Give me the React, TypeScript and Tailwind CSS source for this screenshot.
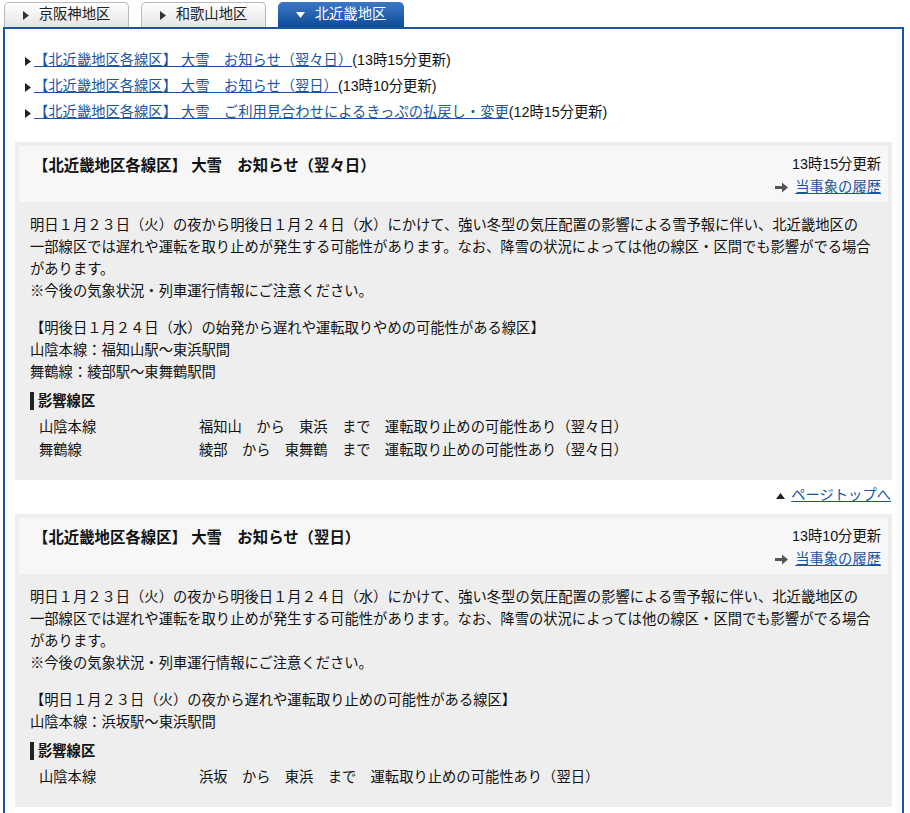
import React from "react";

type Route = { line: string; from: string; to: string; note: string };

type Notice = {
  title: string;
  updated: string;
  body: string[];
  lead: string;
  sections: string[];
  routes: Route[];
};

const notices: Notice[] = [
  {
    title: "【北近畿地区各線区】 大雪　お知らせ（翌々日）",
    updated: "13時15分更新",
    body: [
      "明日１月２３日（火）の夜から明後日１月２４日（水）にかけて、強い冬型の気圧配置の影響による雪予報に伴い、北近畿地区の",
      "一部線区では遅れや運転を取り止めが発生する可能性があります。なお、降雪の状況によっては他の線区・区間でも影響がでる場合",
      "があります。",
      "※今後の気象状況・列車運行情報にご注意ください。",
    ],
    lead: "【明後日１月２４日（水）の始発から遅れや運転取りやめの可能性がある線区】",
    sections: ["山陰本線：福知山駅～東浜駅間", "舞鶴線：綾部駅～東舞鶴駅間"],
    routes: [
      { line: "山陰本線", from: "福知山", to: "東浜", note: "運転取り止めの可能性あり（翌々日）" },
      { line: "舞鶴線", from: "綾部", to: "東舞鶴", note: "運転取り止めの可能性あり（翌々日）" },
    ],
  },
  {
    title: "【北近畿地区各線区】 大雪　お知らせ（翌日）",
    updated: "13時10分更新",
    body: [
      "明日１月２３日（火）の夜から明後日１月２４日（水）にかけて、強い冬型の気圧配置の影響による雪予報に伴い、北近畿地区の",
      "一部線区では遅れや運転を取り止めが発生する可能性があります。なお、降雪の状況によっては他の線区・区間でも影響がでる場合",
      "があります。",
      "※今後の気象状況・列車運行情報にご注意ください。",
    ],
    lead: "【明日１月２３日（火）の夜から遅れや運転取り止めの可能性がある線区】",
    sections: ["山陰本線：浜坂駅～東浜駅間"],
    routes: [{ line: "山陰本線", from: "浜坂", to: "東浜", note: "運転取り止めの可能性あり（翌日）" }],
  },
];

const links = [
  { text: "【北近畿地区各線区】 大雪　お知らせ（翌々日）", time: "(13時15分更新)" },
  { text: "【北近畿地区各線区】 大雪　お知らせ（翌日）", time: "(13時10分更新)" },
  { text: "【北近畿地区各線区】 大雪　ご利用見合わせによるきっぷの払戻し・変更", time: "(12時15分更新)" },
];

const RightTri = ({ className }: { className?: string }) => (
  <svg width="6" height="9" viewBox="0 0 6 9" className={className}>
    <path d="M0 0 L6 4.5 L0 9 Z" fill="currentColor" />
  </svg>
);

const Tab = ({ label, active }: { label: string; active?: boolean }) =>
  active ? (
    <div className="flex h-[25px] w-[126px] items-center justify-center gap-[10px] rounded-t-[5px] bg-gradient-to-b from-[#3a78c6] to-[#0e4c98] text-[14.3px] text-white">
      <svg width="9" height="6" viewBox="0 0 9 6">
        <path d="M0 0 L9 0 L4.5 6 Z" fill="white" />
      </svg>
      <span>{label}</span>
    </div>
  ) : (
    <div className="flex h-[25px] w-[125px] items-center justify-center gap-[10px] rounded-t-[5px] border border-b-0 border-[#b9b9b9] bg-gradient-to-b from-white to-[#e4e4e4] text-[14.3px] text-[#222]">
      <RightTri className="text-[#333]" />
      <span>{label}</span>
    </div>
  );

const NoticeCard = ({ n }: { n: Notice }) => (
  <div className="mx-[10px] bg-[#eeeeee] p-[4px] pb-[18px]">
    <div className="flex h-[56px] justify-between bg-[#f7f7f7] pl-[14px] pr-[7px] pt-[7px]">
      <div className="mt-[1px] text-[15.4px] font-bold leading-[23px] text-[#111]">{n.title}</div>
      <div className="flex flex-col items-end text-[14.3px] leading-[23px] text-[#111]">
        <span>{n.updated}</span>
        <span className="flex items-center gap-[7px]">
          <svg width="13" height="11" viewBox="0 0 13 11">
            <path d="M0 4 H7 V0.5 L13 5.5 L7 10.5 V7 H0 Z" fill="#555" />
          </svg>
          <a className="text-[#1a55a3] underline">当事象の履歴</a>
        </span>
      </div>
    </div>
    <div className="px-[11px] pt-[12px] text-[14.3px] leading-[22px] text-[#111]">
      <p>
        {n.body.map((l, i) => (
          <React.Fragment key={i}>
            {l}
            {i < n.body.length - 1 && <br />}
          </React.Fragment>
        ))}
      </p>
      <p className="mt-[15px]">
        {n.lead}
        {n.sections.map((s) => (
          <React.Fragment key={s}>
            <br />
            {s}
          </React.Fragment>
        ))}
      </p>
      <div className="mt-[7px] flex h-[22px] items-center gap-[4px] font-bold">
        <span className="h-[18px] w-[4px] bg-[#222]" />
        <span>影響線区</span>
      </div>
      <div className="mt-[4px] pl-[9px] leading-[23px]">
        {n.routes.map((r) => (
          <div key={r.line} className="flex">
            <span className="w-[160px]">{r.line}</span>
            <span>
              {r.from}　から　{r.to}　まで　{r.note}
            </span>
          </div>
        ))}
      </div>
    </div>
  </div>
);

export default function App() {
  return (
    <div
      className="h-[813px] w-[910px] overflow-hidden bg-white"
      style={{ fontFamily: '"Liberation Sans", "Noto Sans CJK JP", sans-serif' }}
    >
      <div className="flex items-end gap-[12px] pl-[4px] pt-[2px]">
        <Tab label="京阪神地区" />
        <Tab label="和歌山地区" />
        <Tab label="北近畿地区" active />
      </div>
      <div className="ml-[3px] w-[901px] border-2 border-b-0 border-[#1a55a0] pb-[20px]">
        <ul className="pb-[16px] pl-[20px] pt-[19px] text-[14.3px] text-[#111]">
          {links.map((l) => (
            <li key={l.time + l.text} className="flex h-[26px] items-center gap-[3px]">
              <RightTri className="text-[#222]" />
              <span>
                <a className="text-[#1a55a3] underline">{l.text}</a>
                {l.time}
              </span>
            </li>
          ))}
        </ul>
        <NoticeCard n={notices[0]} />
        <div className="flex h-[34px] items-center justify-end gap-[6px] pb-[2px] pr-[11px] text-[14.3px]">
          <svg width="9" height="6" viewBox="0 0 9 6">
            <path d="M0 6 L4.5 0 L9 6 Z" fill="#222" />
          </svg>
          <a className="text-[#1a55a3] underline">ページトップへ</a>
        </div>
        <NoticeCard n={notices[1]} />
      </div>
    </div>
  );
}
